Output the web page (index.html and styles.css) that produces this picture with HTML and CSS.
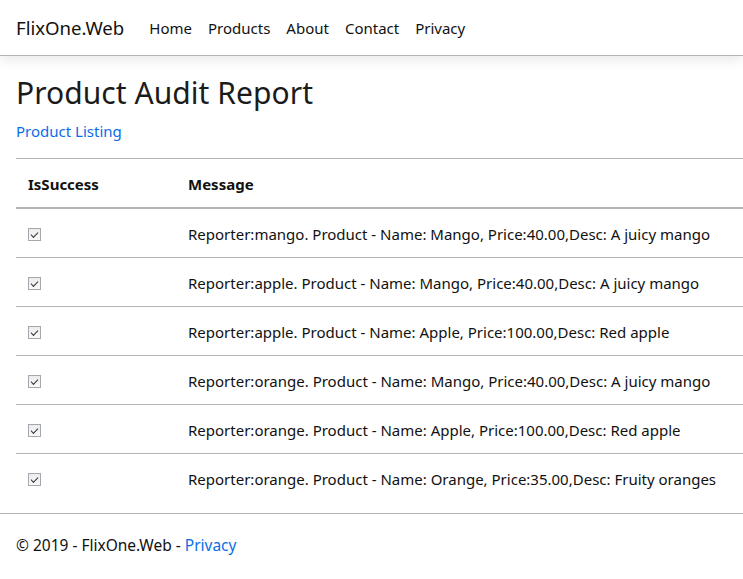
FILE: index.html
```html
<!DOCTYPE html>
<html>
<head>
<meta charset="utf-8">
<title>Product Audit Report - FlixOne.Web</title>
<link rel="stylesheet" href="styles.css">
</head>
<body>
<header>
  <nav class="navbar">
    <a class="brand" href="#">FlixOne.Web</a>
    <ul class="nav">
      <li><a class="nav-link" href="#">Home</a></li>
      <li><a class="nav-link" href="#">Products</a></li>
      <li><a class="nav-link" href="#">About</a></li>
      <li><a class="nav-link" href="#">Contact</a></li>
      <li><a class="nav-link" href="#">Privacy</a></li>
    </ul>
  </nav>
</header>
<main class="container">
  <h1 class="title">Product Audit Report</h1>
  <p class="lead-link"><a class="link" href="#">Product Listing</a></p>
  <table class="table">
    <thead>
      <tr><th class="col-check">IsSuccess</th><th>Message</th></tr>
    </thead>
    <tbody>
      <tr><td><span class="check"></span></td><td>Reporter:mango. Product - Name: Mango, Price:40.00,Desc: A juicy mango</td></tr>
      <tr><td><span class="check"></span></td><td>Reporter:apple. Product - Name: Mango, Price:40.00,Desc: A juicy mango</td></tr>
      <tr><td><span class="check"></span></td><td>Reporter:apple. Product - Name: Apple, Price:100.00,Desc: Red apple</td></tr>
      <tr><td><span class="check"></span></td><td>Reporter:orange. Product - Name: Mango, Price:40.00,Desc: A juicy mango</td></tr>
      <tr><td><span class="check"></span></td><td>Reporter:orange. Product - Name: Apple, Price:100.00,Desc: Red apple</td></tr>
      <tr><td><span class="check"></span></td><td>Reporter:orange. Product - Name: Orange, Price:35.00,Desc: Fruity oranges</td></tr>
    </tbody>
  </table>
</main>
<footer class="footer">
  <div class="footer-inner">&copy; 2019 - FlixOne.Web - <a class="link" href="#">Privacy</a></div>
</footer>
</body>
</html>
```
FILE: styles.css
```css
html { overflow: hidden; }
body {
  margin: 0;
  font-family: "Noto Sans", "Open Sans", sans-serif;
  font-size: 15px;
  line-height: 24px;
  color: #212529;
  background: #fff;
}
a { text-decoration: none; }
.link { color: #0a6ee8; }

.navbar {
  display: flex;
  align-items: center;
  height: 55px;
  padding: 0 16px;
  border-bottom: 1px solid #b1b5ba;
  box-shadow: 0 4px 12px rgba(0,0,0,0.09);
  margin-bottom: 16px;
}
.brand {
  color: #111;
  font-size: 18.6px;
  line-height: 30px;
  margin-right: 17px;
  margin-top: 1px;
}
.nav {
  display: flex;
  list-style: none;
  margin: 0;
  padding: 0;
}
.nav-link {
  display: block;
  color: #111;
  padding: 8px 8px;
}

.container { padding: 0 0 0 16px; }
.title {
  margin: 0 0 6px;
  padding-top: 2px;
  font-weight: 400;
  font-size: 30px;
  line-height: 38px;
  color: #1b1b1b;
  letter-spacing: 0.05px;
}
.lead-link { margin: 0 0 15px; padding-top: 1px; }

.table {
  width: 100%;
  border-collapse: collapse;
  margin: 0;
}
.table th, .table td {
  text-align: left;
  padding: 13px 12px 11px;
  vertical-align: top;
  border-top: 1px solid #b1b5ba;
  white-space: nowrap;
}
.table thead th {
  font-weight: 700;
  border-bottom: 2px solid #b1b5ba;
  color: #111;
}
.col-check { width: 136px; }
.table tbody tr:first-child td { border-top: 0; }
.table td { color: #111; }

.check {
  display: inline-block;
  width: 11px;
  height: 11px;
  border: 1px solid #a3a8ae;
  background: linear-gradient(#ececec, #fafafa);
  vertical-align: -1px;
  position: relative;
}
.check::after {
  content: "";
  position: absolute;
  left: 3px;
  top: 1px;
  width: 6px;
  height: 3px;
  border-left: 1px solid #333;
  border-bottom: 1px solid #333;
  transform: translate(-1px, 2px) rotate(-45deg);
}

.footer {
  margin-top: 11px;
  border-top: 1px solid #b1b5ba;
}
.footer-inner {
  padding: 0 16px;
  font-size: 15.5px;
  line-height: 62px;
  color: #111;
}
```
